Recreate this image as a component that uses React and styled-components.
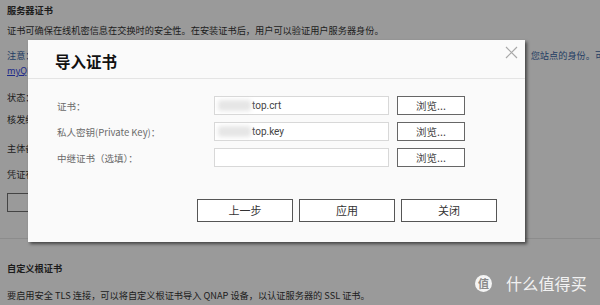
import React from 'react';
import styled, { createGlobalStyle } from 'styled-components';

const GlobalStyle = createGlobalStyle`
  html, body {
    margin: 0;
    padding: 0;
    background: #9a9a9a;
  }
  body {
    font-family: "Noto Sans CJK SC", "Noto Sans", sans-serif;
    overflow: hidden;
  }
`;

const fields = [
  { label: '证书：', value: 'top.crt' },
  { label: '私人密钥(Private Key)：', value: 'top.key' },
  { label: '中继证书（选填）：', value: '' },
];

const App = () => {
  return (
    <>
      <GlobalStyle />
      <Page>
        <Heading $mt={4}>服务器证书</Heading>
        <Para $mt={8}>证书可确保在线机密信息在交换时的安全性。在安装证书后，用户可以验证用户服务器身份。</Para>
        <Note $mt={13}>
          注意：为确保设备与用户之间的连接安全，建议使用由受信任的证书颁发机构所签发的有效证书，以便向所有的网站访问者证明，您站点的身份。可通过以下服务获取证书。
        </Note>
        <Link $mt={3}>myQNAPcloud 申请免费证书</Link>
        <Para $mt={15}>状态：</Para>
        <Para $mt={10}>核发给：</Para>
        <Para $mt={17}>主体备用名称：</Para>
        <Para $mt={14}>凭证有效期：</Para>
        <PageButton>导入证书</PageButton>
        <Rule />
        <Heading $mt={23}>自定义根证书</Heading>
        <Para $mt={15}>要启用安全 TLS 连接，可以将自定义根证书导入 QNAP 设备，以认证服务器的 SSL 证书。</Para>
      </Page>

      <Modal>
        <Header>
          <Title>导入证书</Title>
          <Close aria-label="close">
            <svg width="13" height="13" viewBox="0 0 13 13">
              <path d="M1 1 L12 12 M12 1 L1 12" stroke="#a8a8a8" strokeWidth="1.2" fill="none" />
            </svg>
          </Close>
        </Header>
        <Body>
          {fields.map((f) => (
            <Row key={f.label}>
              <Label>{f.label}</Label>
              <Input>
                {f.value && <Blur />}
                {f.value}
              </Input>
              <Browse>浏览...</Browse>
            </Row>
          ))}
        </Body>
        <Footer>
          <FooterButton>上一步</FooterButton>
          <FooterButton>应用</FooterButton>
          <FooterButton>关闭</FooterButton>
        </Footer>
      </Modal>

      <Watermark>
        <Badge>值</Badge>
        <Brand>什么值得买</Brand>
      </Watermark>
    </>
  );
};

const Page = styled.div`
  display: flex;
  flex-direction: column;
  align-items: flex-start;
  height: 305px;
  padding: 0 7px;
  box-sizing: border-box;
  color: #1c1c1c;
  font-size: 9.2px;
  line-height: 12px;
  white-space: nowrap;
  overflow: hidden;
`;

const Heading = styled.div`
  margin-top: ${(props) => props.$mt}px;
  font-weight: bold;
`;

const Para = styled.div`
  margin-top: ${(props) => props.$mt}px;
`;

const Note = styled.div`
  margin-top: ${(props) => props.$mt}px;
  color: #1f3d63;
`;

const Link = styled.div`
  margin-top: ${(props) => props.$mt}px;
  color: #1d2a8a;
  text-decoration: underline;
`;

const PageButton = styled.div`
  margin-top: 13px;
  width: 90px;
  height: 17px;
  border: 1px solid #444;
  text-align: center;
  line-height: 17px;
`;

const Rule = styled.div`
  align-self: stretch;
  margin: 26px -7px 0;
  height: 1px;
  background: #8c8c8c;
`;

const Modal = styled.div`
  position: absolute;
  left: 28px;
  top: 40px;
  width: 497px;
  height: 202px;
  background: #fafafa;
  box-shadow: 2px 2px 3px rgba(0, 0, 0, 0.55);
  display: flex;
  flex-direction: column;
`;

const Header = styled.div`
  position: relative;
  display: flex;
  align-items: center;
  height: 38px;
  padding-left: 27px;
  border-bottom: 1px solid #e4e4e4;
`;

const Title = styled.div`
  font-size: 15.5px;
  font-weight: bold;
  color: #111;
  margin-top: 4px;
`;

const Close = styled.div`
  position: absolute;
  right: 7px;
  top: 6px;
  width: 13px;
  height: 13px;
  display: flex;
`;

const Body = styled.div`
  display: flex;
  flex-direction: column;
  gap: 7px;
  padding: 17px 0 0 29px;
`;

const Row = styled.div`
  display: flex;
  align-items: center;
  height: 19px;
`;

const Label = styled.div`
  width: 157px;
  font-size: 9.5px;
  color: #6a6a6a;
`;

const Input = styled.div`
  position: relative;
  display: flex;
  align-items: center;
  width: 175px;
  height: 19px;
  padding-left: 37px;
  box-sizing: border-box;
  border: 1px solid #d8d8d8;
  background: #fff;
  font-family: "Roboto", "Noto Sans", sans-serif;
  font-size: 10px;
  color: #444;
  margin-right: 8px;
`;

const Blur = styled.span`
  position: absolute;
  left: 3px;
  top: 3px;
  width: 33px;
  height: 11px;
  border-radius: 3px;
  background: #e6e6e6;
  filter: blur(2px);
`;

const Browse = styled.div`
  width: 66px;
  height: 17px;
  border: 1px solid #666;
  background: #fff;
  text-align: center;
  font-size: 10.5px;
  line-height: 17px;
  color: #444;
`;

const Footer = styled.div`
  display: flex;
  justify-content: flex-end;
  gap: 6px;
  margin-top: 32px;
  padding-right: 28px;
`;

const FooterButton = styled.div`
  width: 94px;
  height: 21px;
  border: 1px solid #555;
  background: #fff;
  text-align: center;
  font-size: 11px;
  line-height: 21px;
  color: #333;
`;

const Watermark = styled.div`
  position: absolute;
  left: 475px;
  top: 274px;
  display: flex;
  align-items: center;
  gap: 14px;
`;

const Badge = styled.div`
  width: 17px;
  height: 17px;
  border-radius: 50%;
  background: #f4f4f4;
  color: #8a8a8a;
  font-size: 11px;
  font-weight: bold;
  line-height: 17px;
  text-align: center;
`;

const Brand = styled.div`
  font-size: 16px;
  line-height: 19px;
  color: #f2f2f2;
  letter-spacing: 0.2px;
`;

export default App;
